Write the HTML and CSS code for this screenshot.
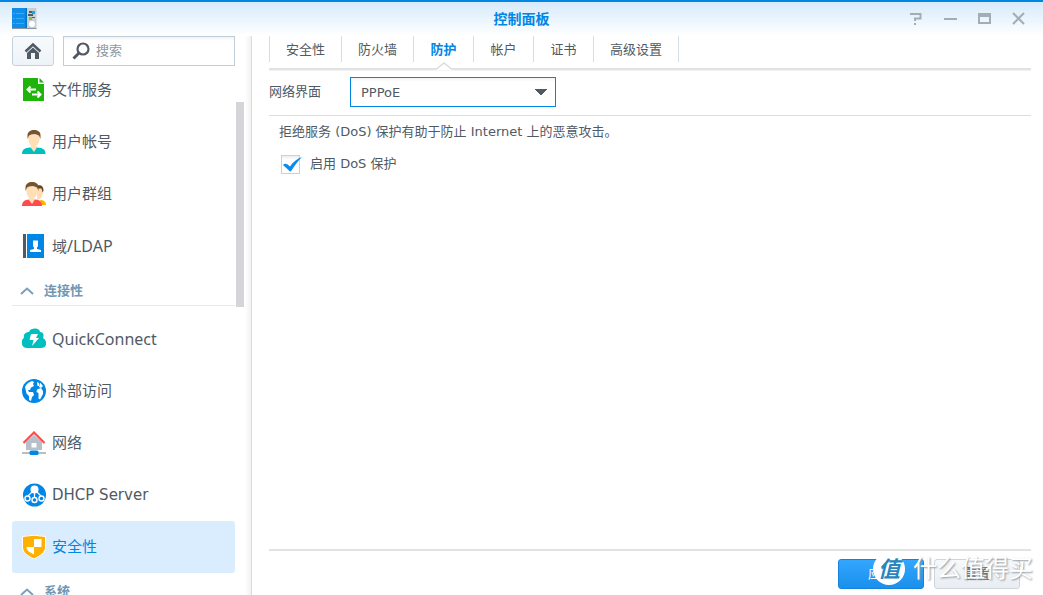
FILE: index.html
```html
<!DOCTYPE html>
<html lang="zh-CN">
<head>
<meta charset="utf-8">
<meta name="viewport" content="width=device-width, initial-scale=1">
<title>控制面板</title>
<link rel="stylesheet" href="styles.css">
</head>
<body>
<div class="window">
  <header class="titlebar">
    <svg class="app-icon" width="26" height="22" viewBox="0 0 26 22" aria-hidden="true">
      <path fill="#c9d0d5" d="M15 0h9.500v20H15z"/><path fill="#8b969e" d="M0 20h24.500v1H0z"/>
      <path fill="#0f8de8" d="M0 0h15v20H0z"/><path fill="#0673c4" d="M13.500 0h1.500v20h-1.500z"/>
      <path stroke="#2fb0f8" d="M1 5.500h2M4 5.500h8M1 10.500h2M4 10.500h8M1 15.500h2M4 15.500h8"/>
      <path fill="#4d5b66" d="M17 3h6v2h-6zM16 6h5v2h-5zM17 9h6v1h-6z"/><path fill="#19a8e8" d="M20 3h3v3h-3z"/><path fill="#82c91e" d="M17 9h3v3h-3z"/>
      <circle cx="20" cy="16" r="3" fill="#fff"/>
    </svg>
    <h1 class="title">控制面板</h1>
    <div class="controls">
      <button class="control" type="button" aria-label="帮助"><svg width="14" height="14" viewBox="0 0 14 14"><path fill="none" stroke="#a3adb5" stroke-width="2" d="M1 2h10.500v4.500H6V9"/><path fill="#a3adb5" d="M5 11h2v2H5z"/></svg></button>
      <button class="control" type="button" aria-label="最小化"><svg width="14" height="14" viewBox="0 0 14 14"><path fill="#a3adb5" d="M1 6h13v2H1z"/></svg></button>
      <button class="control" type="button" aria-label="最大化"><svg width="14" height="14" viewBox="0 0 14 14"><path fill="#a3adb5" fill-rule="evenodd" d="M1 1h13v11H1zM3 5v5h9V5z"/></svg></button>
      <button class="control" type="button" aria-label="关闭"><svg width="14" height="14" viewBox="0 0 14 14"><path fill="none" stroke="#a3adb5" stroke-width="2" d="m2 1 11 11M13 1 2 12"/></svg></button>
    </div>
  </header>

  <div class="body">
    <aside class="sidebar">
      <div class="tools">
        <button class="home" type="button" aria-label="主页"><svg width="18" height="18" viewBox="0 0 18 18"><path fill="none" stroke="#505a64" stroke-width="2.500" d="m1.500 9.500 7.500-7 7.500 7"/><path fill="#505a64" fill-rule="evenodd" d="M9 5.500 3 11v6h12v-6zM7 17v-6h4v6z"/></svg></button>
        <label class="search">
          <svg width="18" height="18" viewBox="0 0 18 18" aria-hidden="true"><circle cx="11" cy="7" r="5.500" fill="none" stroke="#505a64" stroke-width="2.200"/><path stroke="#505a64" stroke-width="3" d="m7 11-5.500 5.500"/></svg>
          <input class="search-input" type="text" placeholder="搜索" aria-label="搜索">
        </label>
      </div>
      <div class="scroll">
        <nav class="nav">
          <a class="item" href="#file"><svg class="icon" viewBox="0 0 24 24"><path fill="#1fb30b" d="M1 0h15v6h6v17H1zM17.500 0 22 4.500h-4.500z"/><path fill="none" stroke="#fff" stroke-width="2" d="M14 11.500H6M8.500 8.500l-3 3 3 3M10 16.500h8M15.500 13.500l3 3-3 3"/></svg>文件服务</a>
          <a class="item" href="#user"><svg class="icon" viewBox="0 0 24 24"><path fill="#00bfc0" d="M0 24c0-5 3-6 8-6.500h7c6 .5 8.500 2 8.500 6.500z"/><path fill="#ffdfb5" d="M6 5h12c0 5-1 9-3.500 10.500V18L12 22l-3-4v-2.500C7 14 6 10 6 5z"/><path fill="#795329" d="M5.500 9V5C6 1.500 8.500 0 12 0s6.500 1.500 6.500 5v4L17 5.500C13 3.500 10 4 7 5.500z"/></svg>用户帐号</a>
          <a class="item" href="#group"><svg class="icon" viewBox="0 0 24 24"><path fill="#ffb300" d="M18 18c4 0 6 2 6 5h-4z"/><path fill="#ffdfb5" d="M15 5h6c1 6-1 10-3 12l-3 1z"/><path fill="#6b431b" d="M15.500 3.500c4-1 6 1 6 5l-1 2-1-4h-4z"/><path fill="#ff4b4d" d="M0 24c0-5 3-6 7-6.500h6c5 .5 7 2 7 6.500z"/><path fill="#ffdfb5" d="M4 5h12c0 5-1 9-3.500 10.500V18L10 22l-3-4v-2.500C5 14 4 10 4 5z"/><path fill="#795329" d="M3.500 9V5C4 1.500 6.500 0 10 0s6.500 1.500 6.500 5v4L15 5.500C11 3.500 8 4 5 5.500z"/></svg>用户群组</a>
          <a class="item" href="#ldap"><svg class="icon" viewBox="0 0 24 24"><path fill="#505a64" d="M1 0h3v24H1z"/><path fill="#0086e5" d="M5 0h17v24H5z"/><path fill="#fff" d="M11 6.500h5v5c0 1-.5 1.500-1 2V15l4 1v2H8v-2l4-1v-1.500c-.5-.5-1-1-1-2z"/></svg><span>域<span class="wide">/LDAP</span></span></a>
          <h2 class="section"><svg class="chevron" viewBox="0 0 14 8"><path fill="none" stroke="#7ba0bd" stroke-width="2" d="m1 7 6-5.500L13 7"/></svg>连接性</h2>
          <a class="item" href="#quick"><svg class="icon" viewBox="0 0 24 24"><path fill="#00bfc0" d="M5 21c-7 0-6-9-3-10-1-4 2-6 5-6C9 0 18 1 18 5c4 0 4 4 3 6 5 3 4 10-2 10z"/><path fill="#fff" d="M9 7h7l-2 4h3l-7 8 1.500-6H7.500z"/></svg><span class="wide">QuickConnect</span></a>
          <a class="item" href="#external"><svg class="icon" viewBox="0 0 24 24"><circle cx="12" cy="12" r="12" fill="#0086e5"/><path fill="#fff" d="M3 8c1-3 4-5 7-6l2 1-1 2 1 2-3 1.500L8 11l-2 0 1 2 4 0 1 3-2 2-1 4-2-1v-4l-2.500-2.500zM15 3l2 1v3h-1.500zM18 3.500l3 3.500-2 2-2-1zM15 10.500l4-1.500 2 3v3l-3 5.500-1.500-1V14l-2-1z"/></svg>外部访问</a>
          <a class="item" href="#network"><svg class="icon" viewBox="0 0 24 24"><path fill="#b5c0ca" fill-rule="evenodd" d="M12 4 4 11v8h16v-8zM9.500 12v4.500h5V12zM0 21h24v2H0z"/><path fill="none" stroke="#ff4b4d" stroke-width="2.200" d="m1.500 12 10.500-10.500L22.500 12"/><rect x="7.500" y="19.500" width="9" height="4.500" rx="1.500" fill="#0086e5"/></svg>网络</a>
          <a class="item" href="#dhcp"><svg class="icon" viewBox="0 0 24 24"><circle cx="12.500" cy="12" r="11.500" fill="#0086e5"/><circle cx="12.500" cy="6.500" r="4" fill="#fff"/><path fill="none" stroke="#fff" stroke-width="1.200" d="M10 9l-4 4M15 9l4 4M12.500 9v5"/><g fill="#0086e5" stroke="#fff" stroke-width="1.400"><circle cx="5.500" cy="15.500" r="2.500"/><circle cx="12.500" cy="17" r="2.500"/><circle cx="19.500" cy="15.500" r="2.500"/></g></svg>DHCP Server</a>
          <a class="item selected" href="#security" aria-current="page"><svg class="icon" viewBox="0 0 24 24"><path fill="#ffb000" stroke="#fff" d="M.5 1.500Q12-1 23.500 1.500V12c0 6-6 9-11.500 12C6 21 .5 18 .5 12z"/><path fill="#fff" d="M12 4h7.500v8H12v7.500C8 17.500 4.500 16 4.500 12H12z"/></svg>安全性</a>
          <h2 class="section"><svg class="chevron" viewBox="0 0 14 8"><path fill="none" stroke="#7ba0bd" stroke-width="2" d="m1 7 6-5.500L13 7"/></svg>系统</h2>
        </nav>
        <div class="scrollbar"><div class="thumb"></div></div>
      </div>
    </aside>

    <main class="main">
      <nav class="tabs">
        <a class="tab" href="#t1">安全性</a>
        <a class="tab" href="#t2">防火墙</a>
        <a class="tab active" href="#t3" aria-current="page">防护<svg class="notch" width="18" height="8" viewBox="0 0 18 8"><path fill="#fff" d="m1 8 8-7 8 7z"/><path fill="none" stroke="#dcdcdc" stroke-width="1.500" d="m1.500 7 7.500-6 7.500 6"/></svg></a>
        <a class="tab" href="#t4">帐户</a>
        <a class="tab" href="#t5">证书</a>
        <a class="tab" href="#t6">高级设置</a>
      </nav>
      <div class="field">
        <label class="field-label" for="iface">网络界面</label>
        <select class="select" id="iface"><option>PPPoE</option></select>
      </div>
      <section class="content">
        <p class="hint">拒绝服务 (DoS) 保护有助于防止 Internet 上的恶意攻击。</p>
        <label class="check"><input class="box" type="checkbox" checked><svg class="tick" width="20" height="15" viewBox="0 0 20 15" aria-hidden="true"><path fill="#0b8cec" d="M0 8C2 5.500 4.500 7 7 9.500 10 5 14 1.500 19 0c-4 4-7 8-10.500 13.500-1 1.500-2 1-3-.5z"/></svg>启用 DoS 保护</label>
      </section>
      <footer class="footer">
        <button class="button primary" type="button">应用</button>
        <button class="button" type="button">重置</button>
      </footer>
    </main>
  </div>
  <div class="watermark" aria-hidden="true"><span class="badge">值</span><span>什么值得买</span></div>
</div>
</body>
</html>
```
FILE: styles.css
```css
* { box-sizing: border-box; }

body {
  margin: 0;
  font: 13px/20px "DejaVu Sans", "Noto Sans CJK SC", sans-serif;
  color: #505a64;
}

h1, h2, p { margin: 0; }
a { color: inherit; text-decoration: none; }
button, input, select { font: inherit; color: inherit; }

.window {
  position: relative;
  display: flex;
  flex-direction: column;
  height: 100vh;
  overflow: hidden;
  background: #fff;
}

.titlebar {
  display: grid;
  grid-template-columns: 1fr auto 1fr;
  align-items: center;
  flex: none;
  height: 36px;
  padding: 0 12px;
  border-top: 2px solid #0086e5;
  background: linear-gradient(#d6eafa, #fff);
}

.title { font-size: 14px; font-weight: 700; color: #0086e5; }
.controls { display: flex; justify-content: flex-end; gap: 20px; padding-right: 6px; }
.control { display: flex; padding: 0; border: 0; background: none; }

.body { display: flex; flex: 1; min-height: 0; }

.sidebar {
  display: flex;
  flex-direction: column;
  flex: none;
  width: 252px;
  padding: 0 6px 0 12px;
  border-right: 1px solid #dcdcdc;
  background: linear-gradient(to left, #f2f2f2, #fff 6px);
}

.tools { display: flex; gap: 9px; flex: none; height: 30px; padding-right: 10px; }

.home {
  display: grid;
  place-items: center;
  flex: none;
  width: 42px;
  padding: 0;
  border: 1px solid #c5d2de;
  border-radius: 3px;
  background: linear-gradient(#f7fafc, #eef3f8);
}

.search {
  display: flex;
  align-items: center;
  flex: 1;
  gap: 6px;
  min-width: 0;
  padding: 0 8px;
  border: 1px solid #c0ceda;
  background: linear-gradient(#f3f3f3, #fff 4px);
}

.search svg { flex: none; }
.search-input { flex: 1; min-width: 0; padding: 0; border: 0; outline: 0; background: none; }
.search-input::placeholder { color: #8d98a3; opacity: 1; }

.scroll { display: flex; flex: 1; min-height: 0; overflow: hidden; }
.nav { flex: 1; margin-top: -2px; }
.scrollbar { width: 10px; padding: 36px 1px 0; }
.thumb { height: 205px; background: #d3d5d8; }

.item {
  display: flex;
  align-items: center;
  gap: 6px;
  height: 52px;
  padding-left: 10px;
  border-radius: 3px;
  font-size: 15px;
}

.item.selected { background: #d9edff; color: #0086e5; }
.icon { flex: none; width: 24px; height: 24px; }
.wide { font-family: "Noto Sans", sans-serif; font-size: 16px; }

.section {
  display: flex;
  align-items: center;
  gap: 10px;
  height: 34px;
  margin-bottom: 7px;
  padding: 4px 0 0 8px;
  border-bottom: 1px solid #e8e9eb;
  font-size: 13px;
  font-weight: 700;
  color: #7097b5;
}

.chevron { width: 14px; height: 8px; }

.main {
  display: flex;
  flex-direction: column;
  flex: 1;
  min-width: 0;
  padding: 0 12px 6px 17px;
}

.tabs {
  display: flex;
  padding-bottom: 6px;
  border-bottom: 2px solid #e2e2e2;
  box-shadow: 0 1px #f4f4f4;
}

.tab {
  position: relative;
  min-width: 60px;
  padding: 4px 16px 2px;
  border-left: 1px solid #d3dee8;
  text-align: center;
}

.tab:last-child { border-right: 1px solid #d3dee8; }
.tab.active { color: #0086e5; font-weight: 700; }
.notch { position: absolute; bottom: -8px; left: calc(50% - 9px); }

.field {
  display: flex;
  align-items: center;
  padding: 7px 0 8px;
  border-bottom: 1px solid #d8dfe5;
}

.field-label { width: 81px; }

.select {
  width: 206px;
  height: 30px;
  padding: 2px 10px 0;
  border: 1px solid #0086e5;
  border-radius: 0;
  outline: 0;
  appearance: none;
  background:
    conic-gradient(from -45deg at 50% 100%, #505a64 90deg, transparent 0) right 8px center / 12px 6px no-repeat,
    linear-gradient(#f3f3f3, #fff 4px);
}

.content { flex: 1; padding: 6px 10px; }

.check { position: relative; display: flex; align-items: center; gap: 10px; width: max-content; margin-top: 12px; padding-left: 2px; }
.box { width: 19px; height: 19px; margin: 0; border: 1px solid #c5d2de; appearance: none; background: linear-gradient(#eee, #fff 4px); }
.tick { position: absolute; left: 4px; top: 3px; }

.footer {
  display: flex;
  justify-content: flex-end;
  gap: 10px;
  padding: 8px 11px 0 0;
  border-top: 2px solid #e2e2e2;
}

.button {
  width: 86px;
  height: 30px;
  padding: 0;
  border: 1px solid #ccd5dd;
  border-radius: 3px;
  background: linear-gradient(#f7f9fb, #e8edf2);
}

.button.primary { border-color: #1583dc; background: linear-gradient(#33a6ff, #1990ec); color: #fff; }

.watermark {
  position: absolute;
  right: 10px;
  bottom: 10px;
  display: flex;
  gap: 8px;
  font: 400 24px/28px "Noto Sans CJK SC", sans-serif;
  color: #fff;
  text-shadow: 1px 1px 2px #8d949a;
  pointer-events: none;
}

.badge {
  width: 32px;
  height: 32px;
  border-radius: 50%;
  background: #fff;
  font-size: 22px;
  font-style: italic;
  font-weight: 700;
  text-align: center;
  color: #2786c0;
  text-shadow: none;
}
```
